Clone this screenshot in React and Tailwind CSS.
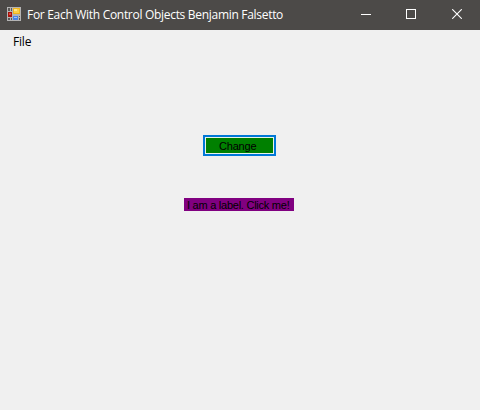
function AppIcon() {
  return (
    <svg width="14" height="14" viewBox="0 0 14 14" shapeRendering="crispEdges">
      <rect width="14" height="14" fill="#b4b4b4" />
      <rect x="1" y="1" width="2" height="3" fill="#5a5856" />
      <rect x="4" y="1" width="1" height="3" fill="#5a5856" />
      <rect x="1" y="5" width="4" height="5" fill="#a8120b" />
      <rect x="2" y="6" width="2" height="2" fill="#e0483a" />
      <rect x="1" y="11" width="2" height="2" fill="#5a5856" />
      <rect x="4" y="11" width="1" height="2" fill="#5a5856" />
      <rect x="6" y="1" width="7" height="6" fill="#f0b41e" />
      <rect x="7" y="2" width="5" height="4" fill="#fccf45" />
      <rect x="7" y="2" width="3" height="2" fill="#ffe68a" />
      <rect x="6" y="9" width="5" height="4" fill="#4a84e6" />
      <rect x="7" y="10" width="3" height="1" fill="#9cc4ff" />
      <rect x="12" y="9" width="1" height="1" fill="#5a5856" />
      <rect x="12" y="11" width="1" height="2" fill="#5a5856" />
    </svg>
  );
}

function WindowControls() {
  return (
    <div className="ml-auto flex text-white">
      <button aria-label="Minimize" className="flex h-[28px] w-[45px] items-center justify-center">
        <svg width="10" height="10" viewBox="0 0 10 10" shapeRendering="crispEdges">
          <rect y="5" width="10" height="1" fill="currentColor" />
        </svg>
      </button>
      <button aria-label="Maximize" className="flex h-[28px] w-[46px] items-center justify-center">
        <svg width="10" height="10" viewBox="0 0 10 10" shapeRendering="crispEdges">
          <rect x="0.5" y="0.5" width="9" height="9" fill="none" stroke="currentColor" />
        </svg>
      </button>
      <button aria-label="Close" className="flex h-[28px] w-[46px] items-center justify-center">
        <svg width="10" height="10" viewBox="0 0 10 10">
          <path d="M0.2 0.2L9.8 9.8M9.8 0.2L0.2 9.8" stroke="currentColor" strokeWidth="1.1" />
        </svg>
      </button>
    </div>
  );
}

export default function App() {
  return (
    <div className="flex h-[410px] w-[480px] flex-col overflow-hidden bg-[#f0f0f0] text-black">
      <header className="flex h-[30px] shrink-0 items-start bg-[#4c4a48]">
        <div className="pt-[7px] pl-[7px]">
          <AppIcon />
        </div>
        <h1 className="pl-[6px] font-['Open_Sans',sans-serif] text-[12px] leading-[30px] tracking-[-0.3px] whitespace-nowrap text-white">
          For Each With Control Objects Benjamin Falsetto
        </h1>
        <WindowControls />
      </header>
      <nav className="flex h-6 shrink-0 items-center pl-[13px] font-['Open_Sans',sans-serif] text-[12px] leading-6 tracking-[-0.2px]">
        File
      </nav>
      <main className="flex flex-col items-start pt-[81px] font-['Liberation_Sans',sans-serif]">
        <button className="ml-[203px] h-[21px] w-[73px] border-2 border-[#0078d7] bg-[#e8f3e8] p-px">
          <span className="flex h-[15px] items-center bg-[#008000] pt-px pl-[13px] text-[11px] leading-[15px] tracking-[-0.2px] text-black">
            Change
          </span>
        </button>
        <div className="mt-[42px] ml-[184px] h-[13px] w-[110px] bg-[#800080] pl-[3px] text-[11px] leading-[15px] tracking-[-0.25px] whitespace-nowrap">
          I am a label. Click me!
        </div>
      </main>
    </div>
  );
}
